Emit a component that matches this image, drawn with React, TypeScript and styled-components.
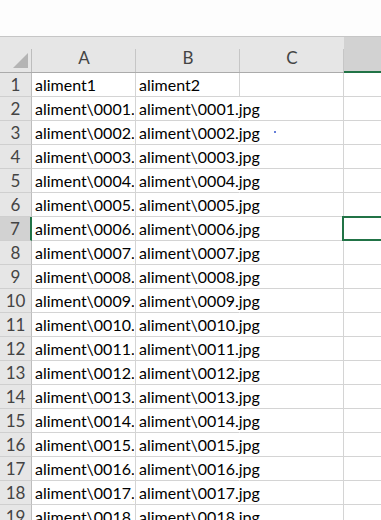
import styled, { createGlobalStyle } from "styled-components";

const GlobalStyle = createGlobalStyle`
  html, body {
    margin: 0;
    padding: 0;
    background: #ffffff;
    overflow: hidden;
  }
  body {
    font-family: Lato, "Open Sans", sans-serif;
  }
`;

const COLUMNS = ["A", "B", "C", "D"];
const SELECTED_COL = 3;
const SELECTED_ROW = 7;

const rows: string[][] = [["aliment1", "aliment2", "", ""]];
for (let i = 1; i <= 18; i++) {
  const name = `aliment\\${String(i).padStart(4, "0")}.jpg`;
  rows.push([name, name, "", ""]);
}

const TopBar = styled.div`
  height: 37px;
  box-sizing: border-box;
  background: #fdfdfd;
  border-bottom: 1px solid #c6c6c6;
`;

const Sheet = styled.div`
  display: grid;
  grid-template-columns: 32px repeat(4, 104px);
  grid-template-rows: 36px;
  grid-auto-rows: 24px;
  width: max-content;
  background: #ffffff;
`;

const Corner = styled.div`
  position: relative;
  box-sizing: border-box;
  background: #e6e6e6;
  border-bottom: 1px solid #ababab;

  &::after {
    content: "";
    position: absolute;
    right: 0;
    top: 12px;
    bottom: 0;
    width: 1px;
    background: #bdbdbd;
  }

  svg {
    position: absolute;
    left: 13px;
    top: 16px;
  }
`;

const ColHeader = styled.div<{ $active: boolean }>`
  position: relative;
  box-sizing: border-box;
  display: flex;
  align-items: flex-end;
  justify-content: center;
  padding-bottom: 4px;
  background: ${({ $active }) => ($active ? "#d2d2d2" : "#e6e6e6")};
  border-bottom: ${({ $active }) =>
    $active ? "2px solid #217346" : "1px solid #ababab"};
  color: #444444;
  font-size: 17px;
  line-height: 20px;

  &::after {
    content: "";
    position: absolute;
    right: 0;
    top: 12px;
    bottom: 0;
    width: 1px;
    background: #c6c6c6;
  }
`;

const RowHeader = styled.div<{ $active: boolean }>`
  box-sizing: border-box;
  display: flex;
  align-items: flex-end;
  justify-content: center;
  padding-bottom: 1px;
  background: ${({ $active }) => ($active ? "#d2d2d2" : "#e6e6e6")};
  border-right: ${({ $active }) =>
    $active ? "2px solid #217346" : "1px solid #bdbdbd"};
  border-bottom: 1px solid #cfcfcf;
  color: #444444;
  font-size: 17px;
  line-height: 20px;
`;

const Cell = styled.div<{ $selected: boolean; $spill: boolean }>`
  position: relative;
  box-sizing: border-box;
  display: flex;
  align-items: flex-end;
  padding: 0 0 1px 3px;
  border-right: 1px solid
    ${({ $spill }) => ($spill ? "transparent" : "#d4d4d4")};
  border-bottom: 1px solid #d4d4d4;
  color: #000000;
  font-size: 16px;
  line-height: 20px;
  white-space: nowrap;
  overflow: ${({ $spill, $selected }) =>
    $spill || $selected ? "visible" : "hidden"};
  z-index: ${({ $spill }) => ($spill ? 1 : 0)};

  ${({ $selected }) =>
    $selected &&
    `
    &::after {
      content: "";
      position: absolute;
      left: -2px;
      top: -1px;
      right: -1px;
      bottom: -1px;
      border: 2px solid #217346;
      z-index: 2;
    }
  `}
`;

const Content = styled.span<{ $spill: boolean }>`
  display: block;
  overflow: ${({ $spill }) => ($spill ? "visible" : "hidden")};
  max-width: ${({ $spill }) => ($spill ? "none" : "calc(100% - 1px)")};
`;

const Speck = styled.span`
  position: absolute;
  left: 34px;
  top: 10px;
  width: 2px;
  height: 2px;
  border-radius: 1px;
  background: #3355cc;
`;

export default function App() {
  return (
    <>
      <GlobalStyle />
      <TopBar />
      <Sheet>
        <Corner>
          <svg width="15" height="16" viewBox="0 0 15 16">
            <polygon points="0,15 15,15 15,0" fill="#b4b4b4" />
          </svg>
        </Corner>
        {COLUMNS.map((c, i) => (
          <ColHeader key={c} $active={i === SELECTED_COL}>
            {c}
          </ColHeader>
        ))}
        {rows.map((row, r) => (
          <RowGroup key={r} index={r + 1} cells={row} />
        ))}
      </Sheet>
    </>
  );
}

function RowGroup({ index, cells }: { index: number; cells: string[] }) {
  return (
    <>
      <RowHeader $active={index === SELECTED_ROW}>{index}</RowHeader>
      {cells.map((text, c) => {
        const selected = index === SELECTED_ROW && c === SELECTED_COL;
        // text spills into the next column when that column is empty
        const spill = c === 1 && index > 1 && !cells[c + 1];
        return (
          <Cell key={c} $selected={selected} $spill={spill}>
            {text && <Content $spill={spill}>{text}</Content>}
            {index === 3 && c === 2 && <Speck />}
          </Cell>
        );
      })}
    </>
  );
}
